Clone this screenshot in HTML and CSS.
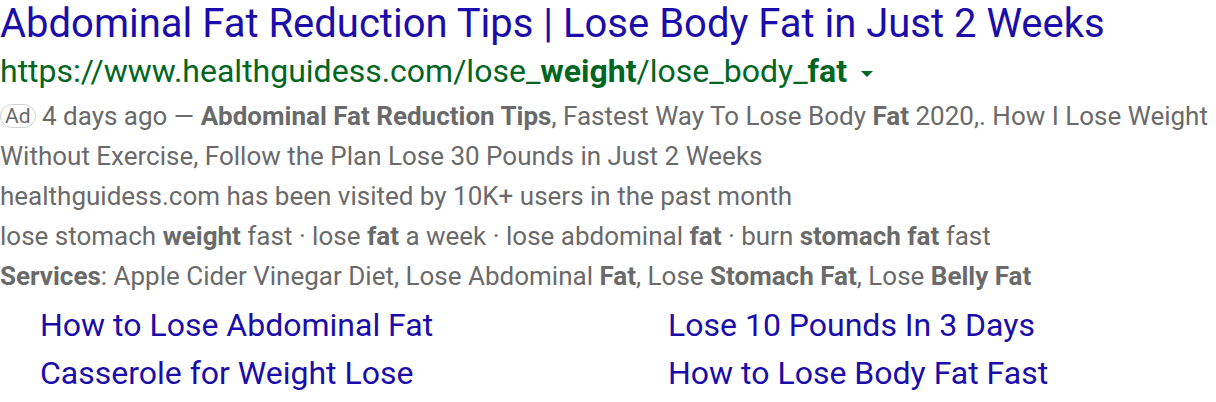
FILE: index.html
```html
<!DOCTYPE html>
<html>
<head>
<meta charset="utf-8">
<link rel="stylesheet" href="styles.css">
</head>
<body>
<div class="ad">
  <a class="title" href="#">Abdominal Fat Reduction Tips | Lose Body Fat in Just 2 Weeks</a>
  <div class="url">https://www.healthguidess.com/lose_<b>weight</b>/lose_body_<b>fat</b><span class="caret"></span></div>
  <div class="snippet">
    <p><span class="badge">Ad</span> 4 days ago — <b>Abdominal Fat Reduction Tips</b>, Fastest Way To Lose Body <b>Fat</b> 2020,. How I Lose Weight Without Exercise, Follow the Plan Lose 30 Pounds in Just 2 Weeks</p>
    <p>healthguidess.com has been visited by 10K+ users in the past month</p>
    <p>lose stomach <b>weight</b> fast · lose <b>fat</b> a week · lose abdominal <b>fat</b> · burn <b>stomach fat</b> fast</p>
    <p><b>Services</b>: Apple Cider Vinegar Diet, Lose Abdominal <b>Fat</b>, Lose <b>Stomach Fat</b>, Lose <b>Belly Fat</b></p>
  </div>
  <div class="sitelinks">
    <a href="#">How to Lose Abdominal Fat</a>
    <a href="#">Lose 10 Pounds In 3 Days</a>
    <a href="#">Casserole for Weight Lose</a>
    <a href="#">How to Lose Body Fat Fast</a>
  </div>
</div>
</body>
</html>
```

FILE: styles.css
```css
html, body {
  margin: 0;
  padding: 0;
  background: #ffffff;
}
body {
  font-family: Roboto, "Liberation Sans", Arial, sans-serif;
}
.ad {
  padding: 0;
}
.title {
  display: block;
  color: #1a0dab;
  text-decoration: none;
  font-size: 40px;
  line-height: 46px;
  padding-top: 1px;
  white-space: nowrap;
}
.url {
  color: #006621;
  font-size: 32px;
  line-height: 49px;
  display: flex;
  align-items: center;
  white-space: pre;
}
.url b {
  font-weight: 700;
}
.caret {
  display: inline-block;
  width: 0;
  height: 0;
  border-left: 6px solid transparent;
  border-right: 6px solid transparent;
  border-top: 6px solid #006621;
  margin-left: 14px;
  margin-top: 4px;
}
.snippet {
  color: #6a6a6a;
  font-size: 26px;
  line-height: 40px;
}
.snippet p {
  margin: 0;
}
.snippet b {
  font-weight: 700;
}
.badge {
  display: inline-block;
  border: 1px solid #d2d2d2;
  border-radius: 12px;
  font-size: 21px;
  line-height: 22px;
  padding: 0 4px;
  color: #6a6a6a;
  vertical-align: 2px;
}
.sitelinks {
  display: grid;
  grid-template-columns: 628px auto;
  padding-left: 40px;
  margin-top: 5px;
}
.sitelinks a {
  color: #1a0dab;
  text-decoration: none;
  font-size: 32px;
  line-height: 48px;
}
```
